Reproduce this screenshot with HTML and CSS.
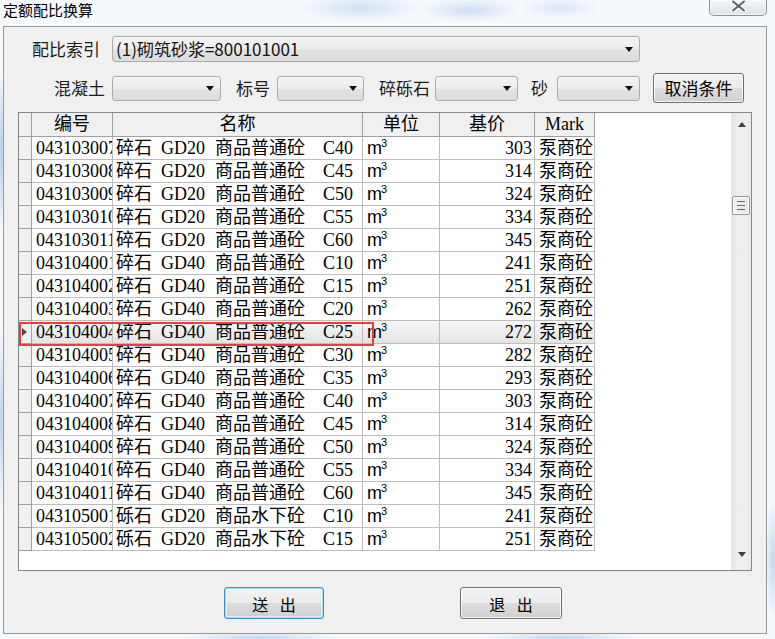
FILE: index.html
```html
<!DOCTYPE html>
<html lang="zh-CN">
<head>
<meta charset="utf-8">
<title>定额配比换算</title>
<link rel="stylesheet" href="styles.css">
</head>
<body>
<div class="titlebar">
  <span class="title">定额配比换算</span>
  <div class="close">
    <svg width="17" height="12" viewBox="0 0 17 12"><path d="M3 1.5 L14 10.5 M14 1.5 L3 10.5" stroke="#fdfdfd" stroke-width="4.2" stroke-linecap="round" fill="none"/><path d="M3 1.5 L14 10.5 M14 1.5 L3 10.5" stroke="#5b5f66" stroke-width="2" stroke-linecap="round" fill="none"/></svg>
  </div>
</div>
<div class="client">
  <div class="row1">
    <span class="lbl lbl-main">配比索引</span>
    <div class="combo combo-main"><span class="combo-text">(1)砌筑砂浆=800101001</span><i class="arrow"></i></div>
  </div>
  <div class="row2">
    <span class="lbl lbl-a">混凝土</span>
    <div class="combo combo-a"><i class="arrow"></i></div>
    <span class="lbl lbl-b">标号</span>
    <div class="combo combo-b"><i class="arrow"></i></div>
    <span class="lbl lbl-c">碎砾石</span>
    <div class="combo combo-c"><i class="arrow"></i></div>
    <span class="lbl lbl-d">砂</span>
    <div class="combo combo-d"><i class="arrow"></i></div>
    <button class="btn btn-cancel">取消条件</button>
  </div>
  <div class="grid">
    <div class="gridview">
      <div class="tr th">
        <div class="rh"></div><div class="hc">编号</div><div class="hc">名称</div><div class="hc">单位</div><div class="hc">基价</div><div class="hc lat">Mark</div>
      </div>
      <div class="tr"><div class="rh"></div><div class="c-code">043103007</div><div class="c-name"><span class="n-mat">碎石</span><span class="n-gd">GD20</span><span class="n-kind">商品普通砼</span><span class="n-gr">C40</span></div><div class="c-unit">m<sup>3</sup></div><div class="c-price">303</div><div class="c-mark">泵商砼</div></div>
      <div class="tr"><div class="rh"></div><div class="c-code">043103008</div><div class="c-name"><span class="n-mat">碎石</span><span class="n-gd">GD20</span><span class="n-kind">商品普通砼</span><span class="n-gr">C45</span></div><div class="c-unit">m<sup>3</sup></div><div class="c-price">314</div><div class="c-mark">泵商砼</div></div>
      <div class="tr"><div class="rh"></div><div class="c-code">043103009</div><div class="c-name"><span class="n-mat">碎石</span><span class="n-gd">GD20</span><span class="n-kind">商品普通砼</span><span class="n-gr">C50</span></div><div class="c-unit">m<sup>3</sup></div><div class="c-price">324</div><div class="c-mark">泵商砼</div></div>
      <div class="tr"><div class="rh"></div><div class="c-code">043103010</div><div class="c-name"><span class="n-mat">碎石</span><span class="n-gd">GD20</span><span class="n-kind">商品普通砼</span><span class="n-gr">C55</span></div><div class="c-unit">m<sup>3</sup></div><div class="c-price">334</div><div class="c-mark">泵商砼</div></div>
      <div class="tr"><div class="rh"></div><div class="c-code">043103011</div><div class="c-name"><span class="n-mat">碎石</span><span class="n-gd">GD20</span><span class="n-kind">商品普通砼</span><span class="n-gr">C60</span></div><div class="c-unit">m<sup>3</sup></div><div class="c-price">345</div><div class="c-mark">泵商砼</div></div>
      <div class="tr"><div class="rh"></div><div class="c-code">043104001</div><div class="c-name"><span class="n-mat">碎石</span><span class="n-gd">GD40</span><span class="n-kind">商品普通砼</span><span class="n-gr">C10</span></div><div class="c-unit">m<sup>3</sup></div><div class="c-price">241</div><div class="c-mark">泵商砼</div></div>
      <div class="tr"><div class="rh"></div><div class="c-code">043104002</div><div class="c-name"><span class="n-mat">碎石</span><span class="n-gd">GD40</span><span class="n-kind">商品普通砼</span><span class="n-gr">C15</span></div><div class="c-unit">m<sup>3</sup></div><div class="c-price">251</div><div class="c-mark">泵商砼</div></div>
      <div class="tr"><div class="rh"></div><div class="c-code">043104003</div><div class="c-name"><span class="n-mat">碎石</span><span class="n-gd">GD40</span><span class="n-kind">商品普通砼</span><span class="n-gr">C20</span></div><div class="c-unit">m<sup>3</sup></div><div class="c-price">262</div><div class="c-mark">泵商砼</div></div>
      <div class="tr sel"><div class="rh"><i class="marker"></i></div><div class="c-code">043104004</div><div class="c-name"><span class="n-mat">碎石</span><span class="n-gd">GD40</span><span class="n-kind">商品普通砼</span><span class="n-gr">C25</span></div><div class="c-unit">m<sup>3</sup></div><div class="c-price">272</div><div class="c-mark">泵商砼</div></div>
      <div class="tr"><div class="rh"></div><div class="c-code">043104005</div><div class="c-name"><span class="n-mat">碎石</span><span class="n-gd">GD40</span><span class="n-kind">商品普通砼</span><span class="n-gr">C30</span></div><div class="c-unit">m<sup>3</sup></div><div class="c-price">282</div><div class="c-mark">泵商砼</div></div>
      <div class="tr"><div class="rh"></div><div class="c-code">043104006</div><div class="c-name"><span class="n-mat">碎石</span><span class="n-gd">GD40</span><span class="n-kind">商品普通砼</span><span class="n-gr">C35</span></div><div class="c-unit">m<sup>3</sup></div><div class="c-price">293</div><div class="c-mark">泵商砼</div></div>
      <div class="tr"><div class="rh"></div><div class="c-code">043104007</div><div class="c-name"><span class="n-mat">碎石</span><span class="n-gd">GD40</span><span class="n-kind">商品普通砼</span><span class="n-gr">C40</span></div><div class="c-unit">m<sup>3</sup></div><div class="c-price">303</div><div class="c-mark">泵商砼</div></div>
      <div class="tr"><div class="rh"></div><div class="c-code">043104008</div><div class="c-name"><span class="n-mat">碎石</span><span class="n-gd">GD40</span><span class="n-kind">商品普通砼</span><span class="n-gr">C45</span></div><div class="c-unit">m<sup>3</sup></div><div class="c-price">314</div><div class="c-mark">泵商砼</div></div>
      <div class="tr"><div class="rh"></div><div class="c-code">043104009</div><div class="c-name"><span class="n-mat">碎石</span><span class="n-gd">GD40</span><span class="n-kind">商品普通砼</span><span class="n-gr">C50</span></div><div class="c-unit">m<sup>3</sup></div><div class="c-price">324</div><div class="c-mark">泵商砼</div></div>
      <div class="tr"><div class="rh"></div><div class="c-code">043104010</div><div class="c-name"><span class="n-mat">碎石</span><span class="n-gd">GD40</span><span class="n-kind">商品普通砼</span><span class="n-gr">C55</span></div><div class="c-unit">m<sup>3</sup></div><div class="c-price">334</div><div class="c-mark">泵商砼</div></div>
      <div class="tr"><div class="rh"></div><div class="c-code">043104011</div><div class="c-name"><span class="n-mat">碎石</span><span class="n-gd">GD40</span><span class="n-kind">商品普通砼</span><span class="n-gr">C60</span></div><div class="c-unit">m<sup>3</sup></div><div class="c-price">345</div><div class="c-mark">泵商砼</div></div>
      <div class="tr"><div class="rh"></div><div class="c-code">043105001</div><div class="c-name"><span class="n-mat">砾石</span><span class="n-gd">GD20</span><span class="n-kind">商品水下砼</span><span class="n-gr">C10</span></div><div class="c-unit">m<sup>3</sup></div><div class="c-price">241</div><div class="c-mark">泵商砼</div></div>
      <div class="tr"><div class="rh"></div><div class="c-code">043105002</div><div class="c-name"><span class="n-mat">砾石</span><span class="n-gd">GD20</span><span class="n-kind">商品水下砼</span><span class="n-gr">C15</span></div><div class="c-unit">m<sup>3</sup></div><div class="c-price">251</div><div class="c-mark">泵商砼</div></div>
    </div>
    <div class="vscroll">
      <div class="sb-btn"><i class="sb-up"></i></div>
      <div class="sb-track"><div class="sb-thumb"><i></i><i></i><i></i></div></div>
      <div class="sb-btn"><i class="sb-down"></i></div>
    </div>
    <div class="mark-box"></div>
  </div>
  <div class="btns">
    <button class="btn btn-ok">送 出</button>
    <button class="btn btn-exit">退 出</button>
  </div>
</div>
</body>
</html>
```
FILE: styles.css
```css
* { box-sizing: border-box; }
html, body { margin: 0; padding: 0; }
body {
  width: 775px;
  height: 639px;
  overflow: hidden;
  font-family: "Noto Sans CJK SC", sans-serif;
  color: #000;
  background:
    radial-gradient(ellipse 60px 14px at 360px 8px, rgba(180,205,235,0.55), rgba(180,205,235,0) 100%),
    radial-gradient(ellipse 50px 12px at 470px 10px, rgba(170,195,230,0.5), rgba(170,195,230,0) 100%),
    radial-gradient(ellipse 40px 10px at 560px 8px, rgba(185,205,235,0.45), rgba(185,205,235,0) 100%),
    radial-gradient(ellipse 6px 80px at 1px 150px, rgba(150,185,230,0.7), rgba(150,185,230,0) 100%),
    radial-gradient(ellipse 6px 90px at 1px 420px, rgba(150,185,230,0.6), rgba(150,185,230,0) 100%),
    radial-gradient(ellipse 80px 6px at 260px 638px, rgba(160,195,235,0.6), rgba(160,195,235,0) 100%),
    radial-gradient(ellipse 80px 6px at 560px 638px, rgba(160,195,235,0.6), rgba(160,195,235,0) 100%),
    radial-gradient(ellipse 8px 60px at 773px 560px, rgba(160,195,235,0.6), rgba(160,195,235,0) 100%),
    #f6f9fc;
}

/* title bar */
.titlebar {
  height: 26px;
  display: flex;
  align-items: flex-start;
}
.title {
  font-size: 15px;
  line-height: 18px;
  margin-top: 1px;
  padding-left: 3px;
  color: #000;
}
.close {
  margin-left: auto;
  margin-right: 8px;
  width: 58px;
  height: 16px;
  border: 1px solid #8b9097;
  border-top: none;
  border-radius: 0 0 5px 5px;
  background: linear-gradient(#f3f5f8, #dde2e8);
  display: flex;
  align-items: center;
  justify-content: center;
  box-shadow: inset 0 0 0 1px rgba(255,255,255,0.7);
}
.close svg { display: block; margin-top: -3px; }

/* client */
.client {
  margin-left: 3px;
  width: 764px;
  height: 608px;
  border: 1px solid #979797;
  background: #f0f0f0;
  padding-top: 9px;
}
.row1, .row2 {
  display: flex;
  align-items: center;
  padding-left: 28px;
}
.row1 { height: 26px; }
.row2 { height: 30px; margin-top: 11px; }

.lbl {
  font-size: 17px;
  line-height: 22px;
  color: #1c1c1c;
  text-align: right;
  padding-right: 7px;
  white-space: nowrap;
}
.lbl-main { width: 80px; text-align: left; padding-left: 0; }
.lbl-a { width: 80px; }
.lbl-b { width: 56px; }
.lbl-c { width: 71px; padding-right: 5px; }
.lbl-d { width: 39px; padding-right: 9px; }

.combo {
  position: relative;
  height: 25px;
  border: 1px solid #acacac;
  border-radius: 3px;
  background: linear-gradient(#f4f4f4 0%, #ececec 50%, #e2e2e2 51%, #dcdcdc 100%);
  display: flex;
  align-items: center;
}
.combo-main { width: 528px; height: 26px; }
.combo-a { width: 109px; }
.combo-b { width: 87px; }
.combo-c { width: 83px; }
.combo-d { width: 83px; }
.combo-text {
  font-size: 17px;
  line-height: 22px;
  padding-left: 3px;
  color: #111;
  white-space: nowrap;
}
.arrow {
  margin-left: auto;
  margin-right: 6px;
  width: 0;
  height: 0;
  border-left: 4px solid transparent;
  border-right: 4px solid transparent;
  border-top: 5px solid #111;
}

.btn {
  font-family: "Noto Sans CJK SC", sans-serif;
  color: #000;
  border: 1px solid #707070;
  border-radius: 3px;
  background: linear-gradient(#f2f2f2 0%, #ebebeb 50%, #dddddd 51%, #cfcfcf 100%);
  box-shadow: inset 0 0 0 1px rgba(255,255,255,0.75);
  padding: 0;
  white-space: nowrap;
}
.btn-cancel {
  margin-left: 13px;
  width: 91px;
  height: 30px;
  font-size: 17px;
  line-height: 22px;
}

/* grid */
.grid {
  position: relative;
  margin-top: 9px;
  margin-left: 14px;
  width: 734px;
  height: 459px;
  border: 1px solid #828790;
  background: #fff;
  display: flex;
}
.gridview {
  flex: 1;
  overflow: hidden;
}
.tr {
  display: grid;
  grid-template-columns: 13px 81px 250px 77px 95px 60px;
  height: 23px;
  font-family: "Liberation Serif", "Noto Sans CJK SC", serif;
  font-size: 18px;
  line-height: 22px;
}
.tr > div {
  border-right: 1px solid #bdbdbd;
  border-bottom: 1px solid #bdbdbd;
  overflow: hidden;
  white-space: pre;
}
.tr > .rh {
  background: #f0f0f0;
  border-right: 1px solid #a0a0a0;
  border-bottom: 1px solid #a0a0a0;
  display: flex;
  align-items: center;
  justify-content: center;
}
.th { height: 24px; }
.th > .hc {
  background: #f0f0f0;
  border-right: 1px solid #a0a0a0;
  border-bottom: 1px solid #a0a0a0;
  text-align: center;
  line-height: 23px;
}
.c-code { padding-left: 4px; }
.c-name { padding-left: 3px; }
.n-mat { display: inline-block; width: 45px; }
.n-gd { display: inline-block; width: 54px; }
.n-kind { display: inline-block; width: 108px; }
.c-unit {
  padding-left: 4px;
  font-family: "Liberation Sans", sans-serif;
  font-size: 18px;
}
.c-unit sup {
  font-size: 11px;
  line-height: 0;
  vertical-align: 7px;
  margin-left: -1px;
}
.c-price { text-align: right; padding-right: 2px; }
.c-mark { padding-left: 4px; }

.sel > div:not(.rh) {
  background: linear-gradient(#f6f6f6, #e4e4e4);
}
.marker {
  width: 0;
  height: 0;
  border-top: 4px solid transparent;
  border-bottom: 4px solid transparent;
  border-left: 5px solid #4a4a4a;
  margin-right: 2px;
}

/* scrollbar */
.vscroll {
  width: 20px;
  display: flex;
  flex-direction: column;
  background: linear-gradient(to right, #e2e2e2, #eeeeee 30%, #ededed 80%, #e6e6e6);
  border-left: 1px solid #e8e8e8;
}
.sb-btn {
  height: 17px;
  display: flex;
  align-items: center;
  justify-content: center;
}
.sb-up {
  width: 0; height: 0;
  border-left: 4px solid transparent;
  border-right: 4px solid transparent;
  border-bottom: 5px solid #404040;
  margin-top: 5px;
}
.sb-down {
  width: 0; height: 0;
  border-left: 4px solid transparent;
  border-right: 4px solid transparent;
  border-top: 5px solid #404040;
  margin-bottom: 14px;
}
.sb-track {
  flex: 1;
  padding-top: 66px;
}
.sb-thumb {
  margin-left: 0;
  width: 18px;
  height: 19px;
  border: 1px solid #979797;
  border-radius: 2px;
  background: linear-gradient(to right, #f3f3f3, #e6e6e6);
  box-shadow: inset 0 0 0 1px rgba(255,255,255,0.8);
  display: flex;
  flex-direction: column;
  align-items: center;
  justify-content: center;
  gap: 3px;
}
.sb-thumb i {
  width: 8px;
  height: 1px;
  background: #6a6a6a;
}

.mark-box {
  position: absolute;
  left: 0;
  top: 209px;
  width: 355px;
  height: 24px;
  border: 2px solid #ef3b3b;
  pointer-events: none;
}

/* bottom buttons */
.btns {
  display: flex;
  margin-top: 16px;
  padding-left: 220px;
}
.btns .btn {
  height: 32px;
  font-size: 16px;
  line-height: 22px;
  word-spacing: 8px;
  padding-top: 1px;
}
.btn-ok {
  width: 100px;
  border-color: #3c8fd0;
  box-shadow: inset 0 0 0 1px #9fdcf5, inset 0 0 0 2px rgba(255,255,255,0.5);
}
.btn-exit {
  width: 102px;
  margin-left: 136px;
}
```
